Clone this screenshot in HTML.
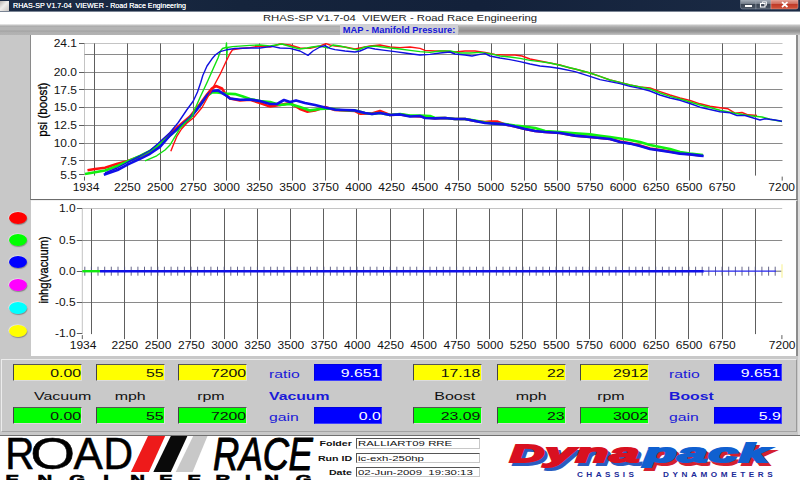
<!DOCTYPE html>
<html><head><meta charset="utf-8"><title>RHAS-SP V1.7-04 VIEWER - Road Race Engineering</title>
<style>
html,body{margin:0;padding:0;background:#fff;}
body{width:800px;height:480px;overflow:hidden;position:relative;font-family:"Liberation Sans",sans-serif;}
.abs{position:absolute;}
#titlebar{position:absolute;left:0;top:0;width:800px;height:12px;box-sizing:border-box;border-bottom:1px solid #7a8494;background:linear-gradient(90deg,#1c2c46 0%,#15243c 30%,#13213a 60%,#1b2b45 100%);}
#titlebar .t{position:absolute;left:12.5px;top:0.3px;font-size:8px;line-height:11px;color:#f4f6fa;font-weight:normal;white-space:pre;transform:scaleX(0.893);transform-origin:0 0;text-shadow:0 0 0.6px #fff}
#ico{position:absolute;left:0;top:1px;width:9px;height:10px;background:linear-gradient(135deg,#b8b4b0,#f0eeec 45%,#c8c4c0);}
#wb{position:absolute;left:740px;top:0;}
#head{position:absolute;left:0;top:12px;width:800px;height:12px;background:#fff;}
#head span{position:absolute;left:0;width:800px;top:-1px;text-align:center;font-size:9.2px;line-height:14px;color:#222;white-space:pre;transform:scaleX(1.232);}
#band{position:absolute;left:0;top:24px;width:800px;height:11px;background:linear-gradient(180deg,#f0f0f0 0%,#d0d0d0 9%,#a8a8a8 20%,#b4b4b4 28%,#b4b4b4 55%,#a0a0a0 64%,#b0b0b0 73%,#b3b3b3 100%);}
#band2{position:absolute;left:459px;top:24px;width:341px;height:11px;background:linear-gradient(180deg,#f4f4f4 0%,#c4c4c4 12%,#a6a6a6 30%,#909090 62%,#a6a6a6 80%,#c6c6c6 100%);}
#maplab{position:absolute;left:340px;top:24px;width:118px;height:11px;background:#cfcfd4;overflow:visible}
#maplab span{position:absolute;left:0;width:118px;text-align:center;top:1px;font-size:9px;line-height:11px;font-weight:bold;color:#1515d8;white-space:pre;transform:scaleX(1.035);}
#bg{position:absolute;left:0;top:35px;width:800px;height:401px;background:#c8c8c8;border-right:2px solid #dcdcdc;box-sizing:border-box}
.panel{position:absolute;background:#fff;}
#p1{left:30px;top:35px;width:768px;height:165px;box-sizing:border-box;border-bottom:1px solid #6c6c6c;border-right:2px solid #8c8c8c;border-left:1px solid #8a8a8a}
#p2{left:31px;top:200px;width:767px;height:156px;box-sizing:border-box;border-top:1px solid #f0f0f0;border-right:2px solid #8c8c8c;}
#dp{position:absolute;left:1px;top:359px;width:796px;height:73px;background:#c9c9c9;border-top:1px solid #ececec;border-left:1px solid #ececec;border-right:1px solid #9a9a9a;border-bottom:1px solid #a4a4a4;box-sizing:border-box}
.fld{position:absolute;box-sizing:border-box;border-top:1px solid #555;border-left:1px solid #444;border-right:1px solid #dcdcdc;border-bottom:1px solid #dcdcdc;overflow:hidden}
.fld span{position:absolute;right:0.5px;top:0.5px;font-size:11.3px;line-height:15px;color:#111;transform:scaleX(1.4);transform-origin:100% 50%;white-space:pre}
.yel{background:#ffff00}.grn{background:#00ff00}.blu{background:#0000ff;border-color:#0000e0 #4040ff #4040ff #0000e0}
.blu span{color:#fff}
.lab{position:absolute;font-size:11.5px;line-height:14px;color:#111;white-space:pre}
.lab span{display:inline-block;transform:scaleX(1.39);}
.lab span.l{transform-origin:0 50%}
.lab.bl{color:#1a1ad8}
.lab.bl span{transform:scaleX(1.37)}
.lab.b{font-weight:bold}
.dot{position:absolute;left:8.8px;width:17.8px;height:12px;border-radius:50%;box-shadow:-0.5px -0.5px 1px rgba(255,255,255,.7),0.5px 1px 1px rgba(90,90,90,.6);}
#bottom{position:absolute;left:0;top:435px;width:800px;height:45px;background:#fff;border-top:1px solid #707070;box-sizing:border-box}
.ilab{position:absolute;left:271.8px;width:80px;text-align:right;font-size:7.8px;line-height:12px;font-weight:bold;color:#111;white-space:pre}
.ilab span{display:inline-block;transform:scaleX(1.36);transform-origin:100% 50%}
.ifld{position:absolute;box-sizing:border-box;left:356px;width:124px;height:11px;border:1px solid #555;border-right-color:#c8c8c8;border-bottom-color:#c8c8c8;background:#fff;font-size:7.5px;line-height:10px;color:#111;white-space:pre;overflow:hidden}
.ifld span{display:inline-block;margin-left:0.8px;transform:scaleX(1.52);transform-origin:0 50%}
</style></head><body>
<div id="titlebar"><div id="ico"></div><div class="t">RHAS-SP V1.7-04  VIEWER - Road Race Engineering</div>
<svg id="wb" width="60" height="10" viewBox="740 0 60 10"><defs><linearGradient id="gb" x1="0" y1="0" x2="0" y2="1"><stop offset="0" stop-color="#a4acb6"/><stop offset="0.45" stop-color="#717b88"/><stop offset="0.5" stop-color="#3c4654"/><stop offset="1" stop-color="#4a5565"/></linearGradient><linearGradient id="gr" x1="0" y1="0" x2="0" y2="1"><stop offset="0" stop-color="#e0a094"/><stop offset="0.45" stop-color="#d06858"/><stop offset="0.5" stop-color="#c03a28"/><stop offset="1" stop-color="#d0553c"/></linearGradient></defs><path d="M740.5 0h15.5v9h-13.5q-2 0-2-2z" fill="url(#gb)" stroke="#9aa4b0" stroke-width="0.5"/><rect x="756" y="0" width="15" height="9" fill="url(#gb)" stroke="#9aa4b0" stroke-width="0.5"/><path d="M771 0h27v7q0 2-2 2h-25z" fill="url(#gr)" stroke="#e8a8a0" stroke-width="0.5"/><rect x="745" y="5" width="7" height="2" fill="#fff"/><rect x="760.5" y="3.5" width="4.5" height="3.5" fill="none" stroke="#fff" stroke-width="1.1"/><path d="M762.5 3v-1.2h4v3.5h-1.2" fill="none" stroke="#fff" stroke-width="0.8"/><path d="M782 2.2l5.5 4.8m0-4.8l-5.5 4.8" stroke="#fff" stroke-width="1.7"/></svg></div>
<div id="head"><span>RHAS-SP V1.7-04  VIEWER - Road Race Engineering</span></div>
<div id="band"></div><div id="band2"></div>
<div id="maplab"><span>MAP - Manifold Pressure:</span></div>
<div id="bg"></div>
<div class="panel" id="p1"></div>
<div class="panel" id="p2"></div>
<div class="dot" style="top:211.5px;background:#ff0000"></div>
<div class="dot" style="top:234.2px;background:#00ff00"></div>
<div class="dot" style="top:256.0px;background:#0000ff"></div>
<div class="dot" style="top:279.0px;background:#ff00ff"></div>
<div class="dot" style="top:302.0px;background:#00ffff"></div>
<div class="dot" style="top:325.0px;background:#ffff00"></div>
<div id="dp"></div>
<div class="fld yel" style="left:13px;top:364px;width:69px;height:16.5px"><span>0.00</span></div>
<div class="fld grn" style="left:13px;top:407.3px;width:69px;height:16.5px"><span>0.00</span></div>
<div class="fld yel" style="left:96px;top:364px;width:69px;height:16.5px"><span>55</span></div>
<div class="fld grn" style="left:96px;top:407.3px;width:69px;height:16.5px"><span>55</span></div>
<div class="fld yel" style="left:178.4px;top:364px;width:69px;height:16.5px"><span>7200</span></div>
<div class="fld grn" style="left:178.4px;top:407.3px;width:69px;height:16.5px"><span>7200</span></div>
<div class="fld blu" style="left:314px;top:364px;width:68px;height:16.5px"><span>9.651</span></div>
<div class="fld blu" style="left:314px;top:407.3px;width:68px;height:16.5px"><span>0.0</span></div>
<div class="lab " style="left:62.5px;top:388.6px;width:120px;margin-left:-60px;text-align:center"><span>Vacuum</span></div>
<div class="lab " style="left:130.5px;top:388.6px;width:120px;margin-left:-60px;text-align:center"><span>mph</span></div>
<div class="lab " style="left:210.5px;top:388.6px;width:120px;margin-left:-60px;text-align:center"><span>rpm</span></div>
<div class="lab bl" style="left:268.6px;top:367.0px;"><span class="l">ratio</span></div>
<div class="lab bl b" style="left:268.6px;top:388.6px;"><span class="l">Vacuum</span></div>
<div class="lab bl" style="left:268.6px;top:410.0px;"><span class="l">gain</span></div>
<div class="fld yel" style="left:413px;top:364px;width:69px;height:16.5px"><span>17.18</span></div>
<div class="fld grn" style="left:413px;top:407.3px;width:69px;height:16.5px"><span>23.09</span></div>
<div class="fld yel" style="left:497px;top:364px;width:69px;height:16.5px"><span>22</span></div>
<div class="fld grn" style="left:497px;top:407.3px;width:69px;height:16.5px"><span>23</span></div>
<div class="fld yel" style="left:580.3px;top:364px;width:69px;height:16.5px"><span>2912</span></div>
<div class="fld grn" style="left:580.3px;top:407.3px;width:69px;height:16.5px"><span>3002</span></div>
<div class="fld blu" style="left:714px;top:364px;width:68px;height:16.5px"><span>9.651</span></div>
<div class="fld blu" style="left:714px;top:407.3px;width:68px;height:16.5px"><span>5.9</span></div>
<div class="lab " style="left:454.5px;top:388.6px;width:120px;margin-left:-60px;text-align:center"><span>Boost</span></div>
<div class="lab " style="left:531.6px;top:388.6px;width:120px;margin-left:-60px;text-align:center"><span>mph</span></div>
<div class="lab " style="left:610.5px;top:388.6px;width:120px;margin-left:-60px;text-align:center"><span>rpm</span></div>
<div class="lab bl" style="left:668.6px;top:367.0px;"><span class="l">ratio</span></div>
<div class="lab bl b" style="left:668.6px;top:388.6px;"><span class="l">Boost</span></div>
<div class="lab bl" style="left:668.6px;top:410.0px;"><span class="l">gain</span></div>
<div id="bottom"></div>
<svg class="abs" style="left:0;top:0" width="800" height="480" viewBox="0 0 800 480" font-family="Liberation Sans, sans-serif">
<g stroke="#c4c4c4" stroke-width="1" fill="none"><line x1="84.5" y1="43.4" x2="84.5" y2="175.1"/><line x1="84.5" y1="43.5" x2="782.5" y2="43.5"/></g>
<g stroke="#8a8a8a" stroke-width="1" fill="none"><line x1="84.5" y1="54.5" x2="782.5" y2="54.5"/><line x1="84.5" y1="72.5" x2="782.5" y2="72.5"/><line x1="84.5" y1="89.5" x2="782.5" y2="89.5"/><line x1="84.5" y1="107.5" x2="782.5" y2="107.5"/><line x1="84.5" y1="125.5" x2="782.5" y2="125.5"/><line x1="84.5" y1="143.5" x2="782.5" y2="143.5"/><line x1="84.5" y1="160.5" x2="782.5" y2="160.5"/></g>
<g stroke="#5e5e5e" stroke-width="1" fill="none"><line x1="94.5" y1="43.4" x2="94.5" y2="175.6"/><line x1="127.5" y1="43.4" x2="127.5" y2="180.6"/><line x1="160.5" y1="43.4" x2="160.5" y2="180.6"/><line x1="193.5" y1="43.4" x2="193.5" y2="180.6"/><line x1="226.5" y1="43.4" x2="226.5" y2="180.6"/><line x1="259.5" y1="43.4" x2="259.5" y2="180.6"/><line x1="292.5" y1="43.4" x2="292.5" y2="180.6"/><line x1="325.5" y1="43.4" x2="325.5" y2="180.6"/><line x1="358.5" y1="43.4" x2="358.5" y2="180.6"/><line x1="391.5" y1="43.4" x2="391.5" y2="180.6"/><line x1="424.5" y1="43.4" x2="424.5" y2="180.6"/><line x1="458.5" y1="43.4" x2="458.5" y2="180.6"/><line x1="491.5" y1="43.4" x2="491.5" y2="180.6"/><line x1="524.5" y1="43.4" x2="524.5" y2="180.6"/><line x1="557.5" y1="43.4" x2="557.5" y2="180.6"/><line x1="590.5" y1="43.4" x2="590.5" y2="180.6"/><line x1="623.5" y1="43.4" x2="623.5" y2="180.6"/><line x1="656.5" y1="43.4" x2="656.5" y2="180.6"/><line x1="689.5" y1="43.4" x2="689.5" y2="180.6"/><line x1="722.5" y1="43.4" x2="722.5" y2="180.6"/><line x1="755.5" y1="43.4" x2="755.5" y2="175.6"/><line x1="84.5" y1="176.6" x2="84.5" y2="180.6"/><line x1="782.2" y1="176.6" x2="782.2" y2="180.6"/><line x1="79.0" y1="43.5" x2="84.5" y2="43.5"/><line x1="79.0" y1="72.5" x2="84.5" y2="72.5"/><line x1="79.0" y1="89.5" x2="84.5" y2="89.5"/><line x1="79.0" y1="107.5" x2="84.5" y2="107.5"/><line x1="79.0" y1="125.5" x2="84.5" y2="125.5"/><line x1="79.0" y1="143.5" x2="84.5" y2="143.5"/><line x1="79.0" y1="160.5" x2="84.5" y2="160.5"/><line x1="79.0" y1="174.5" x2="84.5" y2="174.5"/></g>
<text transform="translate(77.0 47.0) scale(1.200 1)" text-anchor="end" font-size="10" fill="#111" font-weight="normal" >24.1</text>
<text transform="translate(77.0 76.0) scale(1.200 1)" text-anchor="end" font-size="10" fill="#111" font-weight="normal" >20.0</text>
<text transform="translate(77.0 93.7) scale(1.200 1)" text-anchor="end" font-size="10" fill="#111" font-weight="normal" >17.5</text>
<text transform="translate(77.0 111.4) scale(1.200 1)" text-anchor="end" font-size="10" fill="#111" font-weight="normal" >15.0</text>
<text transform="translate(77.0 129.1) scale(1.200 1)" text-anchor="end" font-size="10" fill="#111" font-weight="normal" >12.5</text>
<text transform="translate(77.0 146.8) scale(1.200 1)" text-anchor="end" font-size="10" fill="#111" font-weight="normal" >10.0</text>
<text transform="translate(77.0 164.5) scale(1.200 1)" text-anchor="end" font-size="10" fill="#111" font-weight="normal" >7.5</text>
<text transform="translate(77.0 178.7) scale(1.200 1)" text-anchor="end" font-size="10" fill="#111" font-weight="normal" >5.5</text>
<text transform="translate(86.0 190.6) scale(1.200 1)" text-anchor="middle" font-size="10" fill="#111" font-weight="normal" >1934</text>
<text transform="translate(127.3 190.6) scale(1.200 1)" text-anchor="middle" font-size="10" fill="#111" font-weight="normal" >2250</text>
<text transform="translate(160.4 190.6) scale(1.200 1)" text-anchor="middle" font-size="10" fill="#111" font-weight="normal" >2500</text>
<text transform="translate(193.4 190.6) scale(1.200 1)" text-anchor="middle" font-size="10" fill="#111" font-weight="normal" >2750</text>
<text transform="translate(226.5 190.6) scale(1.200 1)" text-anchor="middle" font-size="10" fill="#111" font-weight="normal" >3000</text>
<text transform="translate(259.5 190.6) scale(1.200 1)" text-anchor="middle" font-size="10" fill="#111" font-weight="normal" >3250</text>
<text transform="translate(292.6 190.6) scale(1.200 1)" text-anchor="middle" font-size="10" fill="#111" font-weight="normal" >3500</text>
<text transform="translate(325.6 190.6) scale(1.200 1)" text-anchor="middle" font-size="10" fill="#111" font-weight="normal" >3750</text>
<text transform="translate(358.7 190.6) scale(1.200 1)" text-anchor="middle" font-size="10" fill="#111" font-weight="normal" >4000</text>
<text transform="translate(391.7 190.6) scale(1.200 1)" text-anchor="middle" font-size="10" fill="#111" font-weight="normal" >4250</text>
<text transform="translate(424.8 190.6) scale(1.200 1)" text-anchor="middle" font-size="10" fill="#111" font-weight="normal" >4500</text>
<text transform="translate(457.8 190.6) scale(1.200 1)" text-anchor="middle" font-size="10" fill="#111" font-weight="normal" >4750</text>
<text transform="translate(490.9 190.6) scale(1.200 1)" text-anchor="middle" font-size="10" fill="#111" font-weight="normal" >5000</text>
<text transform="translate(523.9 190.6) scale(1.200 1)" text-anchor="middle" font-size="10" fill="#111" font-weight="normal" >5250</text>
<text transform="translate(557.0 190.6) scale(1.200 1)" text-anchor="middle" font-size="10" fill="#111" font-weight="normal" >5500</text>
<text transform="translate(590.0 190.6) scale(1.200 1)" text-anchor="middle" font-size="10" fill="#111" font-weight="normal" >5750</text>
<text transform="translate(623.0 190.6) scale(1.200 1)" text-anchor="middle" font-size="10" fill="#111" font-weight="normal" >6000</text>
<text transform="translate(656.1 190.6) scale(1.200 1)" text-anchor="middle" font-size="10" fill="#111" font-weight="normal" >6250</text>
<text transform="translate(689.1 190.6) scale(1.200 1)" text-anchor="middle" font-size="10" fill="#111" font-weight="normal" >6500</text>
<text transform="translate(722.2 190.6) scale(1.200 1)" text-anchor="middle" font-size="10" fill="#111" font-weight="normal" >6750</text>
<text transform="translate(781.7 190.6) scale(1.200 1)" text-anchor="middle" font-size="10" fill="#111" font-weight="normal" >7200</text>
<text transform="translate(47.2 109.6) rotate(-90) scale(1 1.09)" text-anchor="middle" font-size="11.6" fill="#000" stroke="#000" stroke-width="0.25">psi (boost)</text>
<g fill="none" stroke-linejoin="round" stroke-linecap="butt">
<polyline stroke="#ff1010" stroke-width="2.6" points="87.5,170.3 95.0,169.0 105.0,167.8 117.5,163.8 128.0,161.0 140.0,156.5 150.0,151.5 160.0,144.5 170.0,133.5 180.0,125.0 190.0,116.5 200.0,104.0 207.0,94.5 212.0,88.3 216.0,86.0 222.0,88.5 226.0,95.0 230.0,98.5 240.0,100.5 250.0,99.8 260.0,103.0 270.0,106.4 280.0,105.0 290.0,103.0 300.0,109.0 307.0,111.6 315.0,110.4 325.0,107.0 335.0,110.0 345.0,110.5 355.0,111.0 360.0,113.6 372.0,113.5 380.0,111.0 390.0,115.0 400.0,114.4 410.0,116.0 420.0,116.5 435.0,118.4 445.0,118.0 455.0,119.0 465.0,119.0 475.0,121.0 485.0,122.0 490.0,121.6 497.0,121.6 505.0,124.4 515.0,126.4 525.0,129.0 535.0,131.0 545.0,132.0 560.0,133.0 575.0,135.6 590.0,137.0 600.0,138.0 610.0,139.0 620.0,141.5 630.0,143.2 640.0,145.5 650.0,148.5 660.0,150.0 670.0,151.5 680.0,153.2 690.0,154.2 703.0,155.6"/>
<polyline stroke="#10f010" stroke-width="2.6" points="85.0,174.0 95.0,172.3 105.0,170.5 117.5,166.0 128.0,161.3 140.0,156.0 150.0,150.8 160.0,144.0 170.0,135.5 180.0,127.0 190.0,118.0 200.0,105.5 207.0,96.0 212.0,92.5 215.0,92.2 225.0,93.5 235.0,94.1 243.0,96.6 250.0,99.0 260.0,101.0 270.0,102.0 280.0,105.0 290.0,104.0 300.0,107.0 310.0,110.4 320.0,109.0 330.0,108.5 340.0,110.0 355.0,110.4 365.0,113.0 372.0,114.0 380.0,113.0 390.0,115.0 400.0,114.0 410.0,115.6 420.0,115.6 430.0,116.0 435.0,118.0 445.0,118.0 455.0,119.0 465.0,119.0 475.0,120.5 485.0,122.5 495.0,123.6 505.0,124.0 515.0,125.5 520.0,126.0 535.0,128.0 545.0,131.0 560.0,132.0 575.0,133.3 590.0,134.4 600.0,135.7 610.0,137.0 620.0,138.5 630.0,140.0 640.0,142.0 650.0,145.0 660.0,147.0 670.0,149.0 680.0,152.0 690.0,153.6 703.0,155.0"/>
<polyline stroke="#1010e8" stroke-width="2.6" points="103.8,174.8 117.5,170.0 128.0,164.4 140.0,158.8 150.0,153.8 160.0,146.9 170.0,135.5 180.0,126.5 190.0,118.0 200.0,105.5 207.0,95.5 212.0,91.0 218.0,90.4 225.0,94.8 230.0,98.5 240.0,99.8 250.0,99.5 260.0,101.0 270.0,104.0 277.0,104.0 284.0,100.0 290.0,102.0 296.0,100.4 305.0,103.0 315.0,105.0 325.0,107.6 335.0,109.6 345.0,110.0 355.0,110.4 365.0,113.0 372.0,114.0 380.0,113.0 390.0,115.0 400.0,114.4 410.0,116.5 420.0,116.0 425.0,118.0 435.0,118.4 445.0,118.0 455.0,119.0 465.0,119.0 475.0,121.0 485.0,123.0 495.0,123.6 505.0,124.4 515.0,126.4 525.0,129.0 535.0,131.0 545.0,132.0 560.0,133.0 575.0,135.6 590.0,137.0 600.0,138.0 610.0,139.0 620.0,142.0 630.0,143.6 640.0,146.0 650.0,149.0 660.0,150.4 670.0,152.0 680.0,153.6 690.0,154.4 700.0,155.6 703.7,156.0"/>
<polyline stroke="#ff1010" stroke-width="1.4" points="170.8,151.3 173.3,145.0 176.7,136.7 181.5,129.0 186.7,123.3 193.3,118.0 202.0,107.5 207.0,98.5 212.5,88.5 220.5,73.5 226.3,61.0 230.0,53.5 232.5,49.8 240.0,48.5 250.0,47.6 260.0,46.0 270.0,47.0 280.0,44.0 290.0,45.0 300.0,48.0 310.0,48.4 315.0,47.0 320.0,46.0 326.0,43.6 330.0,45.0 335.0,46.0 345.0,47.0 355.0,49.0 360.0,48.0 370.0,46.0 380.0,45.0 390.0,47.0 400.0,47.6 410.0,47.0 420.0,48.4 425.0,50.4 435.0,51.0 445.0,51.0 455.0,52.0 465.0,51.0 475.0,51.0 485.0,52.4 495.0,54.4 505.0,55.0 515.0,55.0 522.0,56.0 530.0,59.0 540.0,61.0 550.0,63.0 560.0,65.0 570.0,68.0 575.0,69.0 590.0,73.0 600.0,76.4 610.0,80.0 620.0,82.4 630.0,85.0 640.0,87.0 650.0,88.0 660.0,91.6 670.0,95.0 680.0,98.0 690.0,100.5 700.0,103.8 710.0,106.2 720.0,107.7 728.0,108.8 735.0,113.2 742.0,112.5 748.0,114.8 757.0,115.5"/>
<polyline stroke="#10e010" stroke-width="1.4" points="145.0,160.8 156.7,155.8 165.0,150.0 170.0,145.0 175.0,136.7 180.0,128.3 185.4,122.5 191.7,117.0 195.4,108.0 200.0,97.5 207.5,81.5 213.7,67.5 218.0,58.0 220.5,51.0 222.5,48.5 226.0,47.5 226.5,43.0 226.8,56.6 227.3,47.5 232.5,46.6 250.0,45.4 260.0,45.0 270.0,46.0 282.0,44.0 292.0,47.0 300.0,49.0 307.0,48.0 312.0,47.0 320.0,46.0 328.0,48.0 333.0,45.0 340.0,46.0 350.0,48.4 358.0,50.0 365.0,47.0 375.0,46.0 390.0,48.0 400.0,49.0 410.0,50.4 420.0,51.6 430.0,52.4 440.0,51.0 450.0,51.0 460.0,53.0 470.0,53.0 480.0,52.4 490.0,53.6 500.0,56.0 510.0,57.0 520.0,58.4 530.0,60.4 540.0,61.6 550.0,63.0 560.0,65.2 575.0,69.0 590.0,73.0 600.0,76.4 610.0,80.0 620.0,82.4 630.0,85.0 640.0,87.0 650.0,89.0 660.0,93.0 670.0,96.4 680.0,99.0 690.0,102.0 700.0,105.0 710.0,107.5 720.0,110.2 735.0,113.2 750.0,115.8 762.0,117.0 770.0,119.2 782.0,121.5"/>
<polyline stroke="#1010e0" stroke-width="1.4" points="105.0,173.0 117.0,168.0 128.0,162.0 140.0,156.0 150.0,150.5 158.3,143.3 170.0,132.5 178.3,122.5 186.7,110.0 193.3,101.0 197.5,92.0 200.8,82.3 202.8,75.5 207.0,66.0 212.0,58.8 215.5,54.8 220.0,51.6 226.5,49.8 235.0,48.5 250.0,48.0 260.0,48.0 272.0,46.4 280.0,48.0 290.0,48.4 300.0,51.0 308.0,55.4 313.0,51.0 320.0,47.0 325.0,45.6 330.0,48.4 335.0,49.6 345.0,51.0 355.0,52.0 360.0,51.0 368.0,47.6 375.0,49.0 385.0,50.4 395.0,51.6 405.0,53.0 412.0,54.0 420.0,55.0 430.0,54.4 440.0,53.0 450.0,52.0 455.0,54.0 465.0,55.0 472.0,56.0 480.0,54.4 485.0,53.6 490.0,56.0 500.0,58.0 510.0,59.6 520.0,61.6 530.0,64.0 540.0,66.0 550.0,67.0 560.0,68.5 575.0,71.6 590.0,76.4 600.0,79.6 610.0,81.6 620.0,83.6 630.0,86.4 640.0,88.4 650.0,91.0 660.0,95.0 670.0,98.0 680.0,100.3 690.0,103.5 700.0,107.2 710.0,109.5 720.0,111.8 730.0,112.8 737.0,115.5 745.0,115.5 755.0,118.5 760.0,120.0 765.0,118.8 775.0,120.0 782.0,121.2"/>
</g>
<g stroke="#c4c4c4" stroke-width="1" fill="none"><line x1="82.3" y1="208.8" x2="82.3" y2="333.6"/><line x1="82.3" y1="208.5" x2="782.2" y2="208.5"/></g>
<g stroke="#8a8a8a" stroke-width="1" fill="none"><line x1="82.3" y1="240.5" x2="782.2" y2="240.5"/><line x1="82.3" y1="302.5" x2="782.2" y2="302.5"/></g>
<g stroke="#5e5e5e" stroke-width="1" fill="none"><line x1="91.5" y1="208.8" x2="91.5" y2="334.1"/><line x1="124.5" y1="208.8" x2="124.5" y2="339.1"/><line x1="157.5" y1="208.8" x2="157.5" y2="339.1"/><line x1="190.5" y1="208.8" x2="190.5" y2="339.1"/><line x1="224.5" y1="208.8" x2="224.5" y2="339.1"/><line x1="257.5" y1="208.8" x2="257.5" y2="339.1"/><line x1="290.5" y1="208.8" x2="290.5" y2="339.1"/><line x1="323.5" y1="208.8" x2="323.5" y2="339.1"/><line x1="356.5" y1="208.8" x2="356.5" y2="339.1"/><line x1="390.5" y1="208.8" x2="390.5" y2="339.1"/><line x1="423.5" y1="208.8" x2="423.5" y2="339.1"/><line x1="456.5" y1="208.8" x2="456.5" y2="339.1"/><line x1="489.5" y1="208.8" x2="489.5" y2="339.1"/><line x1="522.5" y1="208.8" x2="522.5" y2="339.1"/><line x1="556.5" y1="208.8" x2="556.5" y2="339.1"/><line x1="589.5" y1="208.8" x2="589.5" y2="339.1"/><line x1="622.5" y1="208.8" x2="622.5" y2="339.1"/><line x1="655.5" y1="208.8" x2="655.5" y2="339.1"/><line x1="688.5" y1="208.8" x2="688.5" y2="339.1"/><line x1="722.5" y1="208.8" x2="722.5" y2="339.1"/><line x1="755.5" y1="208.8" x2="755.5" y2="334.1"/><line x1="82.3" y1="335.1" x2="82.3" y2="339.1"/><line x1="781.9" y1="335.1" x2="781.9" y2="339.1"/><line x1="76.8" y1="208.5" x2="82.3" y2="208.5"/><line x1="76.8" y1="240.5" x2="82.3" y2="240.5"/><line x1="76.8" y1="271.5" x2="82.3" y2="271.5"/><line x1="76.8" y1="302.5" x2="82.3" y2="302.5"/><line x1="76.8" y1="333.5" x2="82.3" y2="333.5"/></g>
<text transform="translate(75.6 212.4) scale(1.200 1)" text-anchor="end" font-size="10" fill="#111" font-weight="normal" >1.0</text>
<text transform="translate(75.6 243.6) scale(1.200 1)" text-anchor="end" font-size="10" fill="#111" font-weight="normal" >0.5</text>
<text transform="translate(75.6 274.8) scale(1.200 1)" text-anchor="end" font-size="10" fill="#111" font-weight="normal" >0.0</text>
<text transform="translate(75.6 306.0) scale(1.200 1)" text-anchor="end" font-size="10" fill="#111" font-weight="normal" >-0.5</text>
<text transform="translate(75.6 337.2) scale(1.200 1)" text-anchor="end" font-size="10" fill="#111" font-weight="normal" >-1.0</text>
<text transform="translate(83.1 348.6) scale(1.200 1)" text-anchor="middle" font-size="10" fill="#111" font-weight="normal" >1934</text>
<text transform="translate(124.9 348.6) scale(1.200 1)" text-anchor="middle" font-size="10" fill="#111" font-weight="normal" >2250</text>
<text transform="translate(158.1 348.6) scale(1.200 1)" text-anchor="middle" font-size="10" fill="#111" font-weight="normal" >2500</text>
<text transform="translate(191.3 348.6) scale(1.200 1)" text-anchor="middle" font-size="10" fill="#111" font-weight="normal" >2750</text>
<text transform="translate(224.5 348.6) scale(1.200 1)" text-anchor="middle" font-size="10" fill="#111" font-weight="normal" >3000</text>
<text transform="translate(257.7 348.6) scale(1.200 1)" text-anchor="middle" font-size="10" fill="#111" font-weight="normal" >3250</text>
<text transform="translate(290.9 348.6) scale(1.200 1)" text-anchor="middle" font-size="10" fill="#111" font-weight="normal" >3500</text>
<text transform="translate(324.1 348.6) scale(1.200 1)" text-anchor="middle" font-size="10" fill="#111" font-weight="normal" >3750</text>
<text transform="translate(357.3 348.6) scale(1.200 1)" text-anchor="middle" font-size="10" fill="#111" font-weight="normal" >4000</text>
<text transform="translate(390.5 348.6) scale(1.200 1)" text-anchor="middle" font-size="10" fill="#111" font-weight="normal" >4250</text>
<text transform="translate(423.7 348.6) scale(1.200 1)" text-anchor="middle" font-size="10" fill="#111" font-weight="normal" >4500</text>
<text transform="translate(456.9 348.6) scale(1.200 1)" text-anchor="middle" font-size="10" fill="#111" font-weight="normal" >4750</text>
<text transform="translate(490.0 348.6) scale(1.200 1)" text-anchor="middle" font-size="10" fill="#111" font-weight="normal" >5000</text>
<text transform="translate(523.2 348.6) scale(1.200 1)" text-anchor="middle" font-size="10" fill="#111" font-weight="normal" >5250</text>
<text transform="translate(556.4 348.6) scale(1.200 1)" text-anchor="middle" font-size="10" fill="#111" font-weight="normal" >5500</text>
<text transform="translate(589.6 348.6) scale(1.200 1)" text-anchor="middle" font-size="10" fill="#111" font-weight="normal" >5750</text>
<text transform="translate(622.8 348.6) scale(1.200 1)" text-anchor="middle" font-size="10" fill="#111" font-weight="normal" >6000</text>
<text transform="translate(656.0 348.6) scale(1.200 1)" text-anchor="middle" font-size="10" fill="#111" font-weight="normal" >6250</text>
<text transform="translate(689.2 348.6) scale(1.200 1)" text-anchor="middle" font-size="10" fill="#111" font-weight="normal" >6500</text>
<text transform="translate(722.4 348.6) scale(1.200 1)" text-anchor="middle" font-size="10" fill="#111" font-weight="normal" >6750</text>
<text transform="translate(782.2 348.6) scale(1.200 1)" text-anchor="middle" font-size="10" fill="#111" font-weight="normal" >7200</text>
<text transform="translate(47.6 270) rotate(-90) scale(1 1.135)" text-anchor="middle" font-size="11.1" fill="#000" stroke="#000" stroke-width="0.25">inhg(vacuum)</text>
<path d="M84.8 266.7v9M91.4 266.7v9M98.0 266.7v9M104.7 266.7v9M111.3 266.7v9M118.0 266.7v9M124.6 266.7v9M131.2 266.7v9M137.9 266.7v9M144.5 266.7v9M151.2 266.7v9M157.8 266.7v9M164.4 266.7v9M171.1 266.7v9M177.7 266.7v9M184.4 266.7v9M191.0 266.7v9M197.6 266.7v9M204.3 266.7v9M210.9 266.7v9M217.5 266.7v9M224.2 266.7v9M230.8 266.7v9M237.5 266.7v9M244.1 266.7v9M250.7 266.7v9M257.4 266.7v9M264.0 266.7v9M270.7 266.7v9M277.3 266.7v9M283.9 266.7v9M290.6 266.7v9M297.2 266.7v9M303.9 266.7v9M310.5 266.7v9M317.1 266.7v9M323.8 266.7v9M330.4 266.7v9M337.0 266.7v9M343.7 266.7v9M350.3 266.7v9M357.0 266.7v9M363.6 266.7v9M370.2 266.7v9M376.9 266.7v9M383.5 266.7v9M390.2 266.7v9M396.8 266.7v9M403.4 266.7v9M410.1 266.7v9M416.7 266.7v9M423.4 266.7v9M430.0 266.7v9M436.6 266.7v9M443.3 266.7v9M449.9 266.7v9M456.6 266.7v9M463.2 266.7v9M469.8 266.7v9M476.5 266.7v9M483.1 266.7v9M489.7 266.7v9M496.4 266.7v9M503.0 266.7v9M509.7 266.7v9M516.3 266.7v9M522.9 266.7v9M529.6 266.7v9M536.2 266.7v9M542.9 266.7v9M549.5 266.7v9M556.1 266.7v9M562.8 266.7v9M569.4 266.7v9M576.1 266.7v9M582.7 266.7v9M589.3 266.7v9M596.0 266.7v9M602.6 266.7v9M609.2 266.7v9M615.9 266.7v9M622.5 266.7v9M629.2 266.7v9M635.8 266.7v9M642.4 266.7v9M649.1 266.7v9M655.7 266.7v9M662.4 266.7v9M669.0 266.7v9M675.6 266.7v9M682.3 266.7v9M688.9 266.7v9M695.6 266.7v9M702.2 266.7v9M708.8 266.7v9M715.5 266.7v9M722.1 266.7v9M728.7 266.7v9M735.4 266.7v9M742.0 266.7v9M748.7 266.7v9M755.3 266.7v9M761.9 266.7v9M768.6 266.7v9M775.2 266.7v9" stroke="#55557c" stroke-width="0.9" fill="none"/>
<path d="" stroke="#555" stroke-width="0.8" fill="none"/>
<line x1="82.3" y1="271.2" x2="100" y2="271.2" stroke="#10e810" stroke-width="2.4"/>
<line x1="100" y1="271.2" x2="703.8" y2="271.2" stroke="#1010e8" stroke-width="2.4"/>
<line x1="703.8" y1="271.2" x2="776" y2="271.2" stroke="#2424f0" stroke-width="1.3"/>
<line x1="776" y1="271.2" x2="781.7" y2="271.2" stroke="#444" stroke-width="0.8"/>
<line x1="782" y1="264.2" x2="782" y2="277.7" stroke="#f8f4a0" stroke-width="1.2"/>
</svg>
<svg class="abs" style="left:0;top:436px" width="800" height="44" viewBox="0 436 800 44" font-family="Liberation Sans, sans-serif">
<text transform="translate(5.2 468.8) scale(0.920 1)" font-size="44" fill="#000" stroke="#000" stroke-width="0.5">R</text>
<text transform="translate(30.2 468.8) scale(1.310 1)" font-size="44" fill="#000" stroke="#000" stroke-width="0.5">O</text>
<text transform="translate(73.5 468.8) scale(1.000 1)" font-size="44" fill="#000" stroke="#000" stroke-width="0.5">A</text>
<text transform="translate(103.4 468.8) scale(0.930 1)" font-size="44" fill="#000" stroke="#000" stroke-width="0.5">D</text>
<polygon points="148,436 165.2,436 148.9,472 130.9,472" fill="#ee1a1a"/>
<polygon points="170.8,436 187.4,436 170.8,472 153.3,472" fill="#0a0a0a"/>
<polygon points="193.2,436 207.5,436 192.6,472 175.7,472" fill="#c8c8c8"/>
<text transform="translate(213 470.3) scale(0.79 1)" font-size="46" font-style="italic" fill="#000" stroke="#000" stroke-width="1.0" stroke-linejoin="round" letter-spacing="-0.5">RACE</text>
<text transform="scale(1.5 1)" x="3.7 25.0 46.1 68.8 86.8 106.1 125.0 143.7 163.3 176.1 197.1" y="484.3" font-size="13.5" font-weight="bold" fill="#000" stroke="#000" stroke-width="0.7">ENGINEERING</text>
<text transform="translate(513.0 465.4) scale(2.00 1)" font-size="26.5" font-weight="bold" font-style="italic" letter-spacing="0.6" stroke-width="2.0" stroke-linejoin="miter" fill="#2a5cc0" stroke="#2a5cc0"><tspan font-size="23.5">D</tspan>yna</text>
<text transform="translate(647.0 465.4) scale(2.00 1)" font-size="26.5" font-weight="bold" font-style="italic" letter-spacing="0.6" stroke-width="2.0" stroke-linejoin="miter" fill="#d42030" stroke="#d42030">pack</text>
<text transform="translate(510.0 462.4) scale(2.00 1)" font-size="26.5" font-weight="bold" font-style="italic" letter-spacing="0.6" stroke-width="2.0" stroke-linejoin="miter" fill="#d81020" stroke="#d81020"><tspan font-size="23.5">D</tspan>yna</text>
<text transform="translate(644.0 462.4) scale(2.00 1)" font-size="26.5" font-weight="bold" font-style="italic" letter-spacing="0.6" stroke-width="2.0" stroke-linejoin="miter" fill="#1060d0" stroke="#1060d0">pack</text>
<text transform="translate(577 476.6) scale(1.3 1)" font-size="6.3" font-weight="bold" fill="#1a2a98" letter-spacing="2.65">CHASSIS</text>
<text transform="translate(663 476.6) scale(1.3 1)" font-size="6.3" font-weight="bold" fill="#1a2a98" letter-spacing="2.75">DYNAMOMETERS</text>
</svg>
<div class="ilab" style="top:438px"><span>Folder</span></div>
<div class="ifld" style="top:438px;height:11px"><span>RALLIART09 RRE</span></div>
<div class="ilab" style="top:453px"><span>Run ID</span></div>
<div class="ifld" style="top:453px;height:10px"><span>ic-exh-250hp</span></div>
<div class="ilab" style="top:467px"><span>Date</span></div>
<div class="ifld" style="top:467px;height:10px"><span>02-Jun-2009&nbsp; 19:30:13</span></div>
</body></html>
